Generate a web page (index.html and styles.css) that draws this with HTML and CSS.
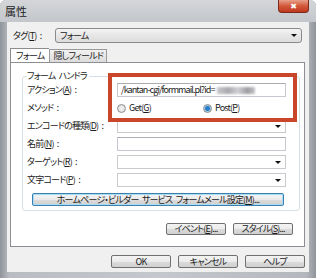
FILE: index.html
```html
<!DOCTYPE html>
<html lang="ja">
<head>
  <meta charset="UTF-8" />
  <title>属性</title>
  <link rel="stylesheet" href="styles.css">
</head>
<body>
  <div class="window">
    <div class="titlebar">
      <span class="title">属性</span>
      <span class="close">&#x2716;</span>
    </div>

    <div class="client">
      <div class="tag-row">
        <span class="tag-label">タグ(<u>T</u>) :</span>
        <div class="combo">フォーム<span class="arrow"></span></div>
      </div>

      <div class="tabs">
        <div class="tab active">フォーム</div>
        <div class="tab">隠しフィールド</div>
      </div>

      <div class="panel">
        <div class="group">
          <div class="legend">フォーム ハンドラ</div>

          <div class="row">
            <span class="label">アクション(<u>A</u>) :</span>
            <div class="field url">/kantan-cgi/formmail.pl?id=<span class="blur"></span></div>
          </div>
          <div class="row">
            <span class="label">メソッド :</span>
            <div class="radios">
              <span class="radio"><span class="dot"></span>Get(<u>G</u>)</span>
              <span class="radio"><span class="dot on"></span>Post(<u>P</u>)</span>
            </div>
          </div>
          <div class="row">
            <span class="label">エンコードの種類(<u>D</u>) :</span>
            <div class="field drop"><span class="arrow"></span></div>
          </div>
          <div class="row">
            <span class="label">名前(<u>N</u>) :</span>
            <div class="field"></div>
          </div>
          <div class="row">
            <span class="label">ターゲット(<u>R</u>) :</span>
            <div class="field drop"><span class="arrow"></span></div>
          </div>
          <div class="row">
            <span class="label">文字コード(<u>P</u>) :</span>
            <div class="field drop"><span class="arrow"></span></div>
          </div>

          <div class="btn wide">ホームページ・ビルダー サービス フォームメール設定(<u>M</u>)...</div>
        </div>

        <div class="btn-row">
          <div class="btn">イベント(<u>E</u>)...</div>
          <div class="btn">スタイル(<u>S</u>)...</div>
        </div>

        <div class="highlight"></div>
      </div>

      <div class="btn-row footer">
        <div class="btn">OK</div>
        <div class="btn">キャンセル</div>
        <div class="btn">ヘルプ</div>
      </div>
    </div>
  </div>
</body>
</html>
```

FILE: styles.css
```css
body {
  margin: 0;
  background: #ffffff;
  font-family: "Noto Sans CJK JP", "DejaVu Sans", sans-serif;
  font-size: 9px;
  font-feature-settings: "palt";
  letter-spacing: -0.8px;
  word-spacing: 2px;
  line-height: 12px;
  color: #1a1a1a;
  white-space: nowrap;
}

u {
  text-decoration: underline;
}

.window {
  width: 316px;
  height: 278px;
  display: flex;
  flex-direction: column;
  background: linear-gradient(90deg, #8f949a 0%, #b9bdc2 3%, #c4c7cb 50%, #b4b8bd 97%, #8f949a 100%);
  border-radius: 6px 6px 0 0;
  overflow: hidden;
}

.titlebar {
  height: 22px;
  display: flex;
  align-items: flex-start;
  justify-content: space-between;
  background: linear-gradient(180deg, #d4d6d9 0%, #c3c6ca 100%);
}

.title {
  margin: 4px 0 0 5px;
  font-size: 11px;
  letter-spacing: 0;
  line-height: 14px;
  color: #222;
}

.close {
  width: 31px;
  height: 13px;
  margin-right: 7px;
  border: 1px solid #7a2a1c;
  border-top: none;
  border-radius: 0 0 4px 4px;
  background: linear-gradient(180deg, #e8a08a 0%, #d2583a 50%, #c0391f 100%);
  color: #fff;
  font-size: 8px;
  letter-spacing: 0;
  line-height: 12px;
  text-align: center;
  box-sizing: border-box;
}

.client {
  flex: 1;
  margin: 0 7px 6px 7px;
  padding: 6px 4px 4px 3px;
  background: #f0f0f0;
  display: flex;
  flex-direction: column;
}

.tag-row {
  display: flex;
  align-items: center;
  height: 15px;
  margin: 0 3px;
}

.tag-label {
  width: 42px;
}

.combo {
  flex: 1;
  height: 15px;
  box-sizing: border-box;
  border: 1px solid #8a8a8a;
  border-radius: 3px;
  background: linear-gradient(180deg, #f4f4f4 0%, #e6e6e6 50%, #dcdcdc 100%);
  padding-left: 4px;
  line-height: 13px;
  position: relative;
}

.arrow {
  position: absolute;
  right: 4px;
  top: 5px;
  width: 0;
  height: 0;
  border-left: 3px solid transparent;
  border-right: 3px solid transparent;
  border-top: 3px solid #111;
}

.tabs {
  display: flex;
  align-items: flex-end;
  height: 14px;
  margin-top: 5px;
}

.tab {
  height: 12px;
  padding: 0 3px;
  border: 1px solid #9a9a9a;
  border-bottom: none;
  background: linear-gradient(180deg, #f2f2f2, #dcdcdc);
  line-height: 12px;
}

.tab.active {
  height: 14px;
  padding: 0 5px;
  background: #ffffff;
  border-color: #8c8c8c;
  border-right: none;
  position: relative;
  top: 1px;
  line-height: 14px;
}

.panel {
  height: 185px;
  box-sizing: border-box;
  border: 1px solid #8c8e94;
  background: #ffffff;
  padding: 13px 4px 0 11px;
  position: relative;
}

.group {
  height: 135px;
  box-sizing: border-box;
  border: 1px solid #d5dfe5;
  border-radius: 3px;
  padding: 0 13px 0 4px;
}

.legend {
  width: fit-content;
  height: 12px;
  margin-top: -7px;
  padding-right: 2px;
  background: #ffffff;
  line-height: 12px;
}

.row {
  display: flex;
  align-items: center;
  height: 14px;
  margin-top: 4px;
}

.legend + .row {
  margin-top: 1px;
}

.label {
  width: 90px;
  flex-shrink: 0;
  color: #222;
}

.field {
  width: 169px;
  height: 14px;
  box-sizing: border-box;
  border: 1px solid #c6c9cf;
  border-top-color: #abadb3;
  background: #fff;
  padding-left: 3px;
  line-height: 12px;
  position: relative;
  overflow: hidden;
}

.field.url {
  letter-spacing: -0.9px;
}

.field.drop {
  border-color: #c8cacd;
}

.blur {
  display: inline-block;
  width: 38px;
  height: 7px;
  margin-left: 2px;
  vertical-align: middle;
  background: linear-gradient(90deg, #c8c8cc, #a8a8ae 30%, #d0d0d4 55%, #9c9ca2 80%, #c4c4c8);
  filter: blur(1px);
}

.radios {
  display: flex;
  align-items: center;
}

.radio {
  display: flex;
  align-items: center;
  width: 86px;
}

.dot {
  width: 9px;
  height: 9px;
  box-sizing: border-box;
  border: 1px solid #8d8d8d;
  border-radius: 50%;
  background: radial-gradient(circle, #f4f4f4, #d8d8d8);
  margin-right: 3px;
}

.dot.on {
  background: radial-gradient(circle, #2a7ec8 0 2px, #9ac8ea 3px, #e8e8e8 4px);
}

.btn {
  width: 60px;
  height: 12px;
  box-sizing: border-box;
  border: 1px solid #707070;
  border-radius: 2px;
  background: linear-gradient(180deg, #f3f3f3 0%, #ebebeb 50%, #dcdcdc 51%, #d0d0d0 100%);
  text-align: center;
  line-height: 10px;
}

.btn.wide {
  width: 252px;
  height: 13px;
  margin: 6px 0 0 5px;
  border-color: #3c7fb1;
  box-shadow: inset 0 0 0 1px #a6dcf4;
  line-height: 11px;
}

.btn-row {
  display: flex;
  justify-content: flex-end;
  gap: 7px;
  margin-top: 12px;
  padding-right: 7px;
}

.btn-row.footer {
  margin-top: 8px;
  padding-right: 0;
}

.btn-row.footer .btn {
  height: 13px;
  line-height: 11px;
}

.highlight {
  position: absolute;
  left: 97px;
  top: 10px;
  width: 189px;
  height: 49px;
  box-sizing: border-box;
  border: 4px solid #c9462a;
}
```
